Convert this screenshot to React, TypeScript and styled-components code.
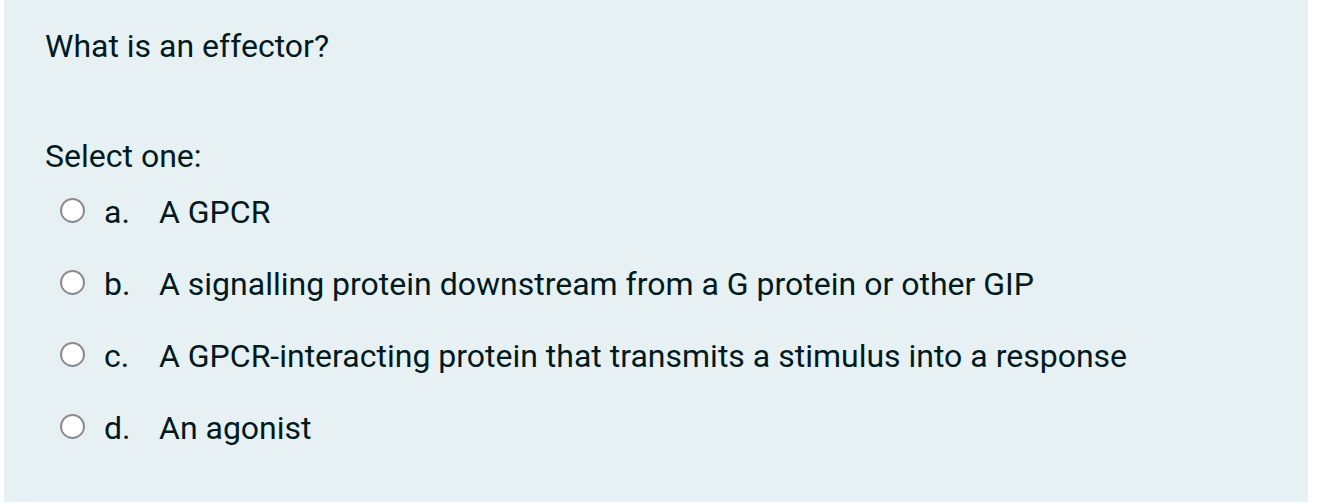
import React from 'react'
import styled, { createGlobalStyle } from 'styled-components'

const GlobalStyle = createGlobalStyle`
  html, body {
    margin: 0;
    padding: 0;
    background: #ffffff;
  }
  body {
    font-family: Roboto, "Liberation Sans", Arial, sans-serif;
    color: #001a1e;
  }
`

const options = [
  { key: 'a.', text: 'A GPCR' },
  { key: 'b.', text: 'A signalling protein downstream from a G protein or other GIP' },
  { key: 'c.', text: 'A GPCR-interacting protein that transmits a stimulus into a response' },
  { key: 'd.', text: 'An agonist' },
]

const App = () => {
  return (
    <>
      <GlobalStyle />
      <Formulation>
        <QText>What is an effector?</QText>
        <Prompt>Select one:</Prompt>
        <Answers>
          {options.map((o) => (
            <Option key={o.key}>
              <Radio />
              <AnswerNumber>{o.key}</AnswerNumber>
              <AnswerText>{o.text}</AnswerText>
            </Option>
          ))}
        </Answers>
      </Formulation>
    </>
  )
}

export const Formulation = styled.div`
  box-sizing: border-box;
  margin-left: 4px;
  width: 1304px;
  height: 502px;
  padding: 25px 41px 0 41px;
  background: #e7f1f4;
  font-size: 32px;
  line-height: 42px;
`
export const QText = styled.div`
  margin: 0;
`
export const Prompt = styled.div`
  margin-top: 68px;
`
export const Answers = styled.div`
  margin-top: 14px;
  display: flex;
  flex-direction: column;
  gap: 30px;
`
export const Option = styled.div`
  display: flex;
  align-items: flex-start;
  height: 42px;
`
export const Radio = styled.span`
  box-sizing: border-box;
  flex: none;
  width: 25px;
  height: 25px;
  margin: 7px 19px 0 15px;
  border-radius: 50%;
  border: 2px solid #8a8c8e;
  background: #ffffff;
`
export const AnswerNumber = styled.span`
  flex: none;
  width: 55px;
`
export const AnswerText = styled.span`
  white-space: nowrap;
`

export default App
